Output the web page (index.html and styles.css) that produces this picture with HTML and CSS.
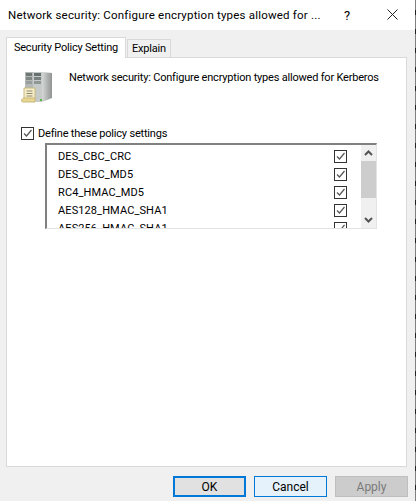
FILE: index.html
```html
<!DOCTYPE html>
<html lang="en">
<head>
  <meta charset="UTF-8" />
  <title>Policy properties</title>
  <link rel="stylesheet" href="styles.css">
</head>
<body>

<div class="dialog">
  <div class="titlebar">
    <span class="title">Network security: Configure encryption types allowed for ...</span>
    <span class="help">?</span>
    <svg class="close" width="11" height="11" viewBox="0 0 11 11">
      <path d="M0.5 0.5 L10.5 10.5 M10.5 0.5 L0.5 10.5" stroke="#222" stroke-width="1" fill="none" />
    </svg>
  </div>

  <div class="content">
    <div class="tabs">
      <div class="tab active">Security Policy Setting</div>
      <div class="tab">Explain</div>
    </div>

    <div class="panel">
      <div class="policy-head">
        <svg class="policy-icon" width="34" height="34" viewBox="0 0 34 34">
          <defs>
            <linearGradient id="side" x1="0" y1="0" x2="1" y2="0">
              <stop offset="0" stop-color="#d5d8d6" />
              <stop offset="1" stop-color="#8f9391" />
            </linearGradient>
          </defs>
          <rect x="4" y="1" width="8" height="24" fill="#b4b9b7" />
          <rect x="5" y="2" width="6" height="3" fill="#6f7775" />
          <rect x="5" y="6" width="6" height="3" fill="#7f8785" />
          <rect x="5" y="10" width="6" height="3" fill="#979e9c" />
          <rect x="12" y="1" width="9" height="30" fill="#c6cac8" />
          <rect x="13" y="2" width="7" height="3" fill="#66706e" />
          <rect x="13" y="6" width="7" height="3" fill="#77807e" />
          <rect x="13" y="10" width="7" height="3" fill="#8f9795" />
          <path d="M21 1 L31 2 V27 L21 31 Z" fill="url(#side)" />
          <rect x="19" y="28" width="2" height="2" fill="#54b948" />
          <path d="M3 17 H14 V28 H3 Z" fill="#f6eec8" stroke="#c8b87e" stroke-width="1" />
          <path d="M0.5 29 Q2 27 3 27 H14 V31 H2 Q0.5 31 0.5 29 Z" fill="#e8d690" stroke="#c8b87e" stroke-width="1" />
          <path d="M5.5 20 H11.5 M5.5 22.5 H11.5 M5.5 25 H11.5" stroke="#8e8a70" stroke-width="1" />
        </svg>
        <p class="policy-name">Network security: Configure encryption types allowed for Kerberos</p>
      </div>

      <label class="define">
        <span class="check"><svg width="11" height="11" viewBox="0 0 11 11"><path d="M2 5.5 L4.5 8 L9.5 2" stroke="#555" stroke-width="1.2" fill="none" /></svg></span>
        Define these policy settings
      </label>

      <div class="listbox">
        <div class="rows">
          <div class="row"><span>DES_CBC_CRC</span><span class="check"><svg width="11" height="11" viewBox="0 0 11 11"><path d="M2 5.5 L4.5 8 L9.5 2" stroke="#555" stroke-width="1.2" fill="none" /></svg></span></div>
          <div class="row"><span>DES_CBC_MD5</span><span class="check"><svg width="11" height="11" viewBox="0 0 11 11"><path d="M2 5.5 L4.5 8 L9.5 2" stroke="#555" stroke-width="1.2" fill="none" /></svg></span></div>
          <div class="row"><span>RC4_HMAC_MD5</span><span class="check"><svg width="11" height="11" viewBox="0 0 11 11"><path d="M2 5.5 L4.5 8 L9.5 2" stroke="#555" stroke-width="1.2" fill="none" /></svg></span></div>
          <div class="row"><span>AES128_HMAC_SHA1</span><span class="check"><svg width="11" height="11" viewBox="0 0 11 11"><path d="M2 5.5 L4.5 8 L9.5 2" stroke="#555" stroke-width="1.2" fill="none" /></svg></span></div>
          <div class="row"><span>AES256_HMAC_SHA1</span><span class="check"><svg width="11" height="11" viewBox="0 0 11 11"><path d="M2 5.5 L4.5 8 L9.5 2" stroke="#555" stroke-width="1.2" fill="none" /></svg></span></div>
        </div>
        <div class="scrollbar">
          <svg width="15" height="16" viewBox="0 0 15 16"><path d="M4 10 L7.5 6.5 L11 10" stroke="#555" stroke-width="2" fill="none" /></svg>
          <div class="track"><div class="thumb"></div></div>
          <svg width="15" height="17" viewBox="0 0 15 17"><path d="M4 7 L7.5 10.5 L11 7" stroke="#555" stroke-width="2" fill="none" /></svg>
        </div>
      </div>
    </div>

    <div class="buttons">
      <button class="btn default">OK</button>
      <button class="btn hover">Cancel</button>
      <button class="btn disabled">Apply</button>
    </div>
  </div>
</div>

</body>
</html>
```

FILE: styles.css
```css
html, body {
  margin: 0;
  padding: 0;
}

body {
  font-family: Roboto, "Liberation Sans", sans-serif;
  font-size: 11px;
  letter-spacing: -0.2px;
  color: #000;
  /* the window edge behind the dialog shows as a 1px dashed line */
  background: repeating-linear-gradient(to bottom, #808080 0 10px, #222 10px 15px, #808080 15px 19px);
}

.dialog {
  width: 415px;
  height: 501px;
  background-color: #f0f0f0;
  display: flex;
  flex-direction: column;
  overflow: hidden;
}

.titlebar {
  height: 30px;
  background-color: #fff;
  display: flex;
  align-items: center;
  padding-left: 8px;
  flex-shrink: 0;
}

.title {
  width: 336px;
  white-space: nowrap;
  font-size: 11.5px;
  letter-spacing: 0.2px;
}

.help {
  width: 43px;
  font-size: 13px;
}

.close {
  display: block;
  margin-bottom: 1px;
}

.content {
  flex: 1;
  display: flex;
  flex-direction: column;
  padding: 7px 7px 4px 6px;
}

.tabs {
  display: flex;
  align-items: flex-end;
  height: 20px;
  position: relative;
  z-index: 1;
}

.tab {
  height: 18px;
  line-height: 17px;
  padding: 0 4px;
  margin-left: 1px;
  background-color: #f0f0f0;
  border: 1px solid #d9d9d9;
  border-bottom: none;
  box-sizing: border-box;
  white-space: nowrap;
}

.tab.active {
  width: 120px;
  height: 21px;
  line-height: 20px;
  margin: 0 0 -1px 0;
  padding: 0;
  background-color: #fff;
  text-align: center;
}

.panel {
  width: 401px;
  height: 410px;
  box-sizing: border-box;
  background-color: #fff;
  border: 1px solid #d9d9d9;
  padding: 13px 29px 0 14px;
}

.policy-head {
  display: flex;
  height: 55px;
}

.policy-icon {
  display: block;
  flex-shrink: 0;
  margin-right: 14px;
}

.policy-name {
  margin: 0;
  white-space: nowrap;
}

.define {
  display: flex;
  align-items: center;
  gap: 4px;
  height: 14px;
}

.check {
  width: 13px;
  height: 13px;
  box-sizing: border-box;
  border: 1px solid #333;
  background-color: #fff;
  display: block;
  flex-shrink: 0;
}

.check svg {
  display: block;
}

.listbox {
  display: flex;
  height: 86px;
  margin: 3px 0 0 24px;
  box-sizing: border-box;
  border-top: 2px solid #808080;
  border-left: 2px solid #808080;
  border-right: 1px solid #e3e3e3;
  border-bottom: 1px solid #e3e3e3;
  overflow: hidden;
  letter-spacing: 0.1px;
}

.rows {
  flex: 1;
  padding: 2px 14px 0 11px;
}

.row {
  height: 18px;
  display: flex;
  align-items: center;
  justify-content: space-between;
}

.scrollbar {
  width: 15px;
  background-color: #f0f0f0;
  display: flex;
  flex-direction: column;
  flex-shrink: 0;
}

.scrollbar svg {
  display: block;
  flex-shrink: 0;
}

.track {
  flex: 1;
}

.thumb {
  height: 37px;
  background-color: #cdcdcd;
}

.buttons {
  display: flex;
  justify-content: flex-end;
  gap: 8px;
  margin-top: 9px;
}

.btn {
  width: 73px;
  height: 21px;
  box-sizing: border-box;
  padding: 0;
  font-family: inherit;
  font-size: 12px;
  border: 1px solid #adadad;
  background-color: #e1e1e1;
}

.btn.default {
  border: 2px solid #0078d7;
}

.btn.hover {
  background-color: #e5f1fb;
  border-color: #0078d7;
}

.btn.disabled {
  background-color: #cccccc;
  border-color: #bfbfbf;
  color: #7a7a7a;
}
```
